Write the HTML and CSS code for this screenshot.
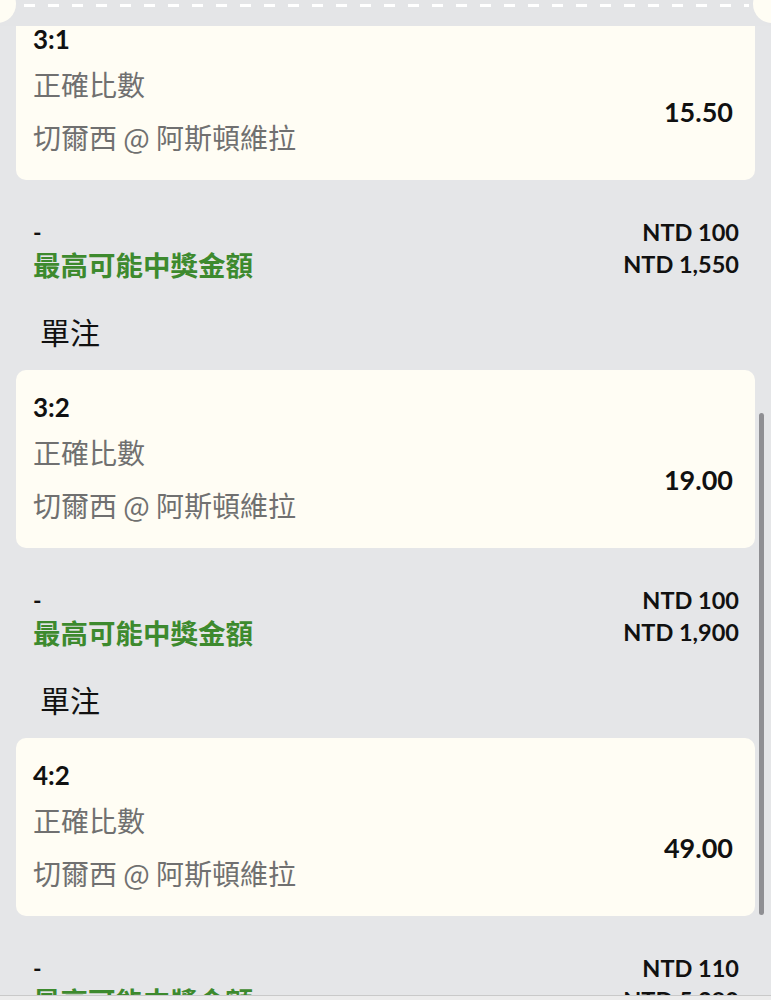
FILE: index.html
```
<html>
<head>
    <title>Bet Slip</title>
    <link rel="stylesheet" href="styles.css">
</head>
<body>
    <div class="slip">
        <div class="perforation">
            <div class="dashes"></div>
        </div>

        <div class="viewport">
            <div class="list">
                <div class="bet-card">
                    <div class="score">3:1</div>
                    <div class="market">正確比數</div>
                    <div class="match">切爾西 @ 阿斯頓維拉</div>
                    <div class="odds">15.50</div>
                </div>
                <div class="summary">
                    <div class="dash">-</div>
                    <div class="amount">NTD 100</div>
                    <div class="payout-label">最高可能中獎金額</div>
                    <div class="amount">NTD 1,550</div>
                </div>
                <div class="section-title">單注</div>

                <div class="bet-card">
                    <div class="score">3:2</div>
                    <div class="market">正確比數</div>
                    <div class="match">切爾西 @ 阿斯頓維拉</div>
                    <div class="odds">19.00</div>
                </div>
                <div class="summary">
                    <div class="dash">-</div>
                    <div class="amount">NTD 100</div>
                    <div class="payout-label">最高可能中獎金額</div>
                    <div class="amount">NTD 1,900</div>
                </div>
                <div class="section-title">單注</div>

                <div class="bet-card">
                    <div class="score">4:2</div>
                    <div class="market">正確比數</div>
                    <div class="match">切爾西 @ 阿斯頓維拉</div>
                    <div class="odds">49.00</div>
                </div>
                <div class="summary">
                    <div class="dash">-</div>
                    <div class="amount">NTD 110</div>
                    <div class="payout-label">最高可能中獎金額</div>
                    <div class="amount">NTD 5,390</div>
                </div>
            </div>
            <div class="scrollbar"></div>
        </div>

        <div class="footer"></div>
    </div>
</body>
</html>
```

FILE: styles.css
```
body {
    margin: 0;
    background-color: #e5e6e8;
    font-family: Lato, "Noto Sans CJK TC", sans-serif;
    overflow: hidden;
}

.slip {
    height: 1000px;
    display: flex;
    flex-direction: column;
    position: relative;
    overflow: hidden;
}

/* ticket edge with the cut-out notches */
.perforation {
    position: relative;
    height: 26px;
    flex-shrink: 0;
    background-color: #e4e5e7;
}

.perforation::before,
.perforation::after {
    content: "";
    position: absolute;
    top: -15px;
    width: 38px;
    height: 38px;
    border-radius: 50%;
    background-color: #fffdf4;
}

.perforation::before {
    left: -22px;
}

.perforation::after {
    right: -20px;
}

.dashes {
    position: absolute;
    top: 4px;
    left: 24px;
    right: 22px;
    height: 3px;
    background: repeating-linear-gradient(90deg, #ffffff 0 11px, transparent 11px 24px);
}

.viewport {
    position: relative;
    flex: 1;
    overflow: hidden;
}

.list {
    margin-top: -24px;
}

.bet-card {
    margin: 0 16px;
    padding: 18px 22px 16px 17px;
    background-color: #fffdf4;
    border-radius: 10px;
    display: grid;
    grid-template-columns: 1fr auto;
    grid-template-rows: 38px 52px 54px;
}

.score {
    grid-column: 1 / 3;
    font-size: 26px;
    font-weight: bold;
    line-height: 38px;
    color: #111;
}

.market,
.match {
    grid-column: 1;
    font-family: "Noto Sans CJK TC", sans-serif;
    font-size: 28px;
    color: #707070;
    align-self: center;
}

.market {
    grid-row: 2;
}

.match {
    grid-row: 3;
}

.odds {
    grid-column: 2;
    grid-row: 2 / 4;
    align-self: center;
    font-size: 27px;
    font-weight: bold;
    color: #111;
}

.summary {
    display: grid;
    grid-template-columns: 1fr auto;
    grid-auto-rows: 32px;
    align-items: center;
    padding: 36px 32px 0 33px;
}

.dash {
    font-size: 23px;
    font-weight: bold;
    color: #111;
}

.payout-label {
    font-family: "Noto Sans CJK TC", sans-serif;
    font-size: 27.5px;
    font-weight: bold;
    color: #3d8a2e;
}

.amount {
    text-align: right;
    font-size: 23.5px;
    font-weight: bold;
    color: #111;
}

.section-title {
    padding: 31px 0 19px 40px;
    font-family: "Noto Sans CJK TC", sans-serif;
    font-size: 30px;
    line-height: 40px;
    color: #111;
}

.scrollbar {
    position: absolute;
    top: 387px;
    right: 7px;
    width: 5px;
    height: 502px;
    border-radius: 3px;
    background-color: #8f8f93;
}

.footer {
    position: absolute;
    left: 0;
    right: 0;
    bottom: 0;
    height: 4px;
    background-color: #ececec;
    border-top: 1px solid #c9c9c9;
}
```
